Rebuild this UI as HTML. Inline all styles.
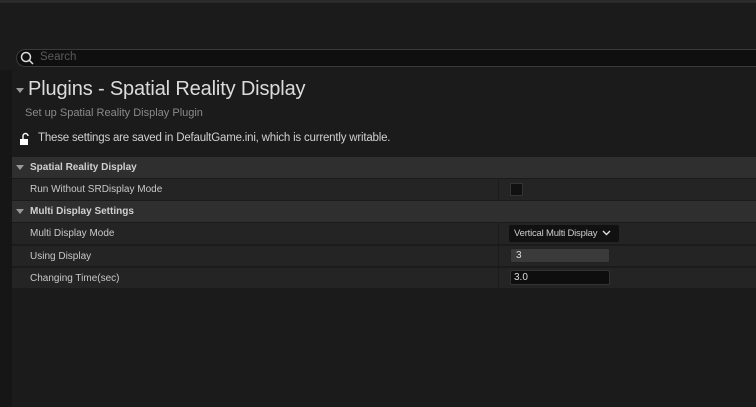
<!DOCTYPE html><html><head><style>
body{margin:0;width:756px;height:407px;background:#1b1b1b;font-family:"Liberation Sans",sans-serif;overflow:hidden;position:relative;color:#c0c0c0}
div{position:absolute;box-sizing:border-box}
.top{left:0;top:0;width:756px;height:3px;background:#2a2a2a}
.search{left:16px;top:49px;width:750px;height:18px;border:1px solid #3a3a3a;border-radius:9px;background:#0f0f0f}
.t{white-space:nowrap}
.hdr{left:12px;width:744px;height:21px;background:#2f2f2f;font-size:10px;font-weight:bold;color:#d0d0d0;line-height:21px;padding-left:18px}
.row{left:12px;width:744px;height:21px;background:#242424;font-size:10px;color:#c8c8c8;line-height:21px;padding-left:18px}
.div{left:498px;width:1px;height:21px;background:#1b1b1b}
.tri{width:0;height:0;border-left:4px solid transparent;border-right:4px solid transparent;border-top:5px solid #9a9a9a}
</style></head><body>
<div class="top"></div>
<div style="left:0;top:70px;width:12px;height:337px;background:#161616"></div>
<div class="search"></div>
<svg style="position:absolute;left:20px;top:51px" width="14" height="14"><circle cx="6" cy="6" r="4.5" fill="none" stroke="#ddd" stroke-width="1.5"/><line x1="9.3" y1="9.3" x2="13" y2="13" stroke="#ddd" stroke-width="1.5"/></svg>
<div class="t" style="left:40px;top:51px;font-size:11.5px;color:#5a5a5a">Search</div>
<div class="tri" style="left:16px;top:88px"></div>
<div class="t" style="left:28px;top:78px;font-size:20px;color:#dcdcdc;letter-spacing:-0.15px">Plugins - Spatial Reality Display</div>
<div class="t" style="left:25px;top:107px;font-size:11px;color:#8a8a8a">Set up Spatial Reality Display Plugin</div>
<svg style="position:absolute;left:19px;top:132px" width="12" height="14"><path d="M4 7V4a2.5 2.5 0 0 1 5 0" fill="none" stroke="#fff" stroke-width="1.4"/><rect x="1" y="7" width="8" height="6" fill="#fff"/></svg>
<div class="t" style="left:38px;top:132px;font-size:11.5px;color:#d0d0d0;letter-spacing:-0.2px">These settings are saved in DefaultGame.ini, which is currently writable.</div>
<div class="hdr" style="top:157px">Spatial Reality Display</div><div class="tri" style="left:16px;top:165px"></div>
<div class="row" style="top:179px">Run Without SRDisplay Mode</div><div class="div" style="top:179px"></div>
<div style="left:510px;top:183px;width:13px;height:13px;background:#111;border:1px solid #333"></div>
<div class="hdr" style="top:201px">Multi Display Settings</div><div class="tri" style="left:16px;top:209px"></div>
<div class="row" style="top:223px">Multi Display Mode</div><div class="div" style="top:223px"></div>
<div class="t" style="left:509px;top:225px;width:110px;height:17px;background:#111;border-radius:2px;font-size:9.5px;color:#ccc;line-height:17px;padding-left:5px;letter-spacing:-0.2px">Vertical Multi Display <svg width="9" height="6" style="margin-left:2px"><path d="M1 1l3.5 3.5L8 1" fill="none" stroke="#ddd" stroke-width="1.4"/></svg></div>
<div class="row" style="top:245px;border-top:1px solid #1b1b1b">Using Display</div><div class="div" style="top:245px"></div>
<div class="t" style="left:510px;top:248px;width:100px;height:15px;background:#3a3a3a;border:1px solid #222;border-radius:2px;font-size:10px;color:#ddd;line-height:13px;padding-left:5px">3</div>
<div class="row" style="top:267px;border-top:1px solid #1b1b1b">Changing Time(sec)</div><div class="div" style="top:267px"></div>
<div class="t" style="left:510px;top:270px;width:100px;height:15px;background:#0e0e0e;border:1px solid #333;border-radius:2px;font-size:10px;color:#ddd;line-height:13px;padding-left:3px">3.0</div>
</body></html>
